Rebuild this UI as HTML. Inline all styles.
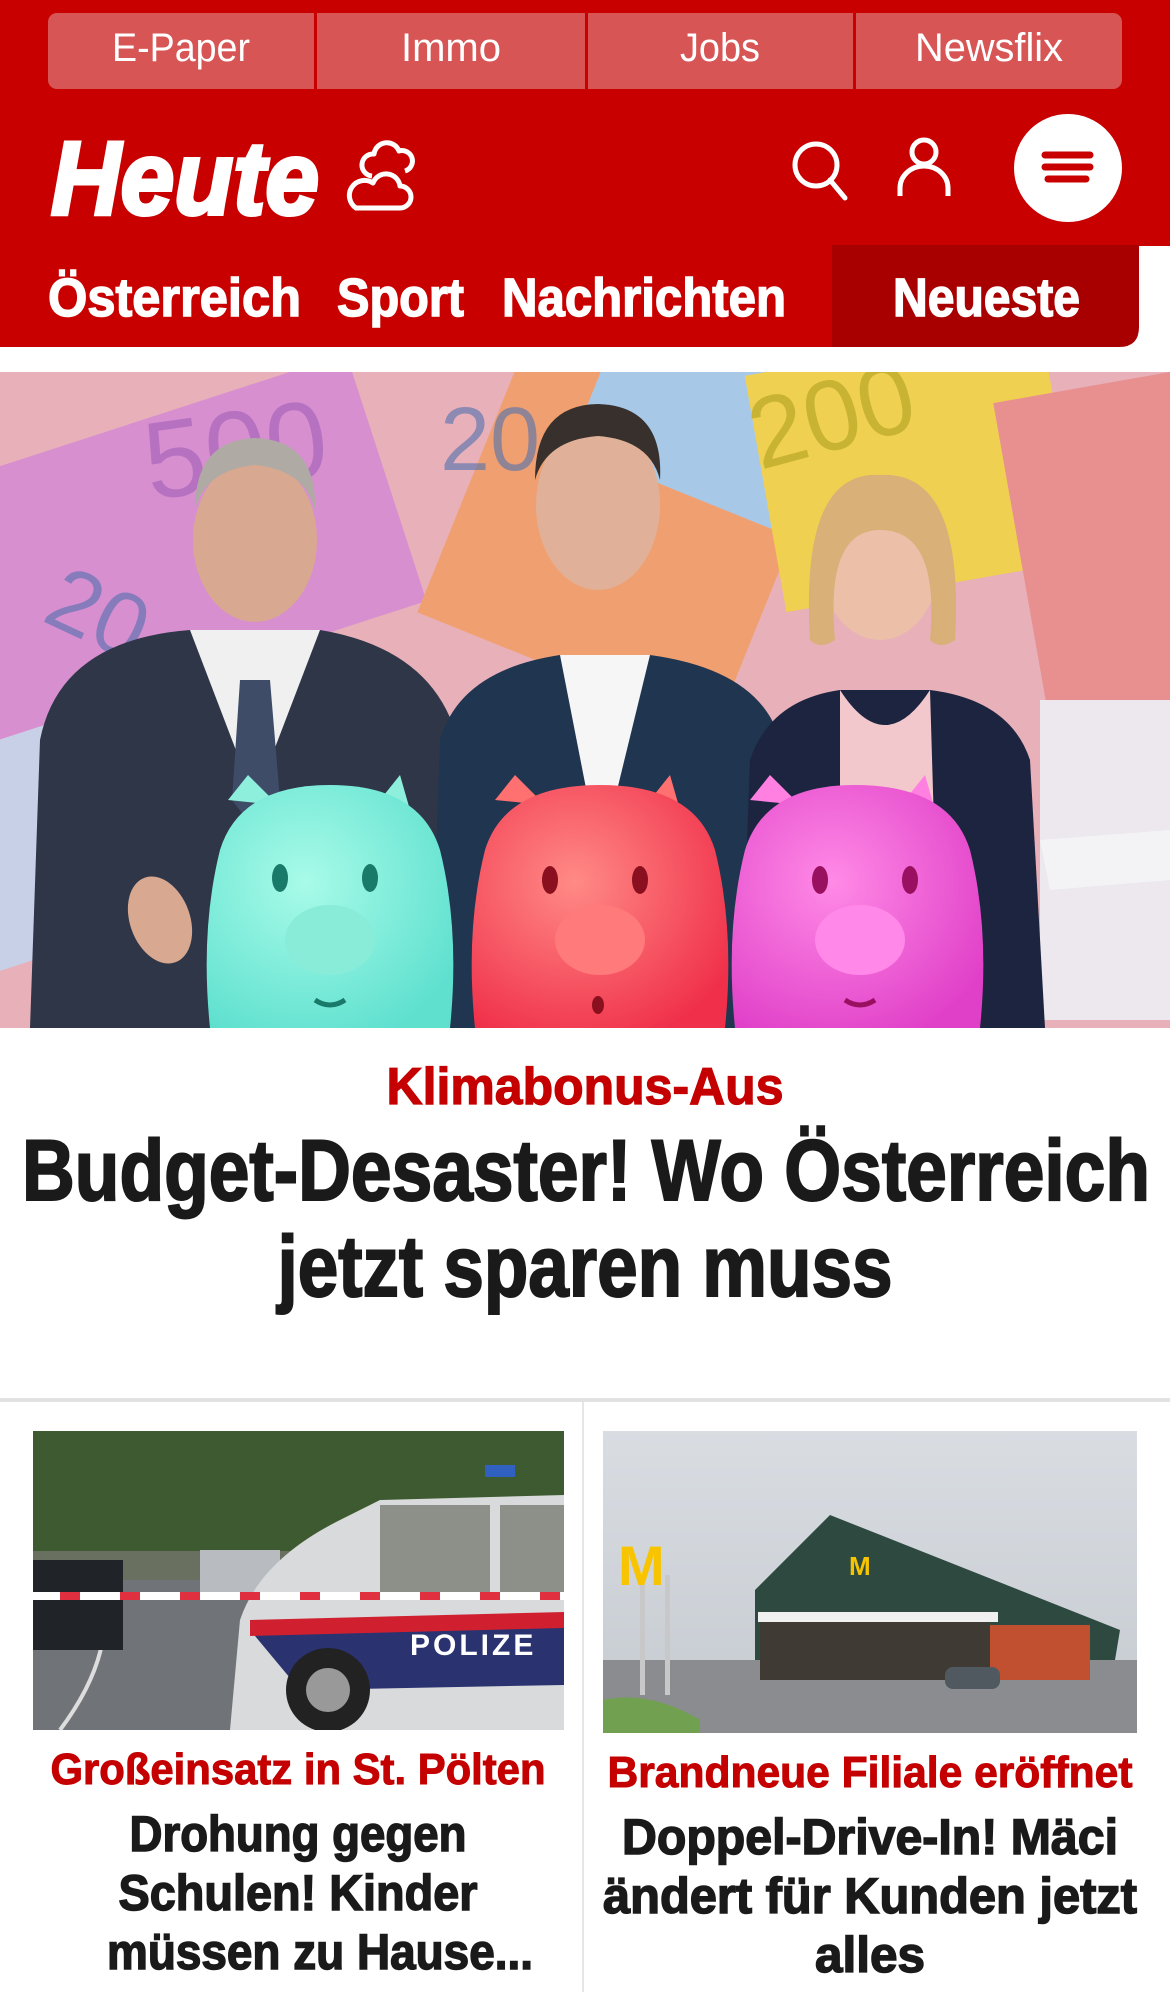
<!DOCTYPE html>
<html><head><meta charset="utf-8"><style>html,body{margin:0;padding:0;background:#fff}svg{display:block}</style></head>
<body>
<svg width="1170" height="1992" viewBox="0 0 1170 1992" xmlns="http://www.w3.org/2000/svg" font-family="Liberation Sans, sans-serif">
<defs>
<linearGradient id="sky" x1="0" y1="0" x2="0" y2="1"><stop offset="0" stop-color="#d9dde2"/><stop offset="1" stop-color="#c5cad0"/></linearGradient>
<radialGradient id="pc" cx=".4" cy=".4" r=".7"><stop offset="0" stop-color="#a8fbe8"/><stop offset="1" stop-color="#5fe0cf"/></radialGradient>
<radialGradient id="pr" cx=".4" cy=".4" r=".7"><stop offset="0" stop-color="#ff8a86"/><stop offset="1" stop-color="#f0304a"/></radialGradient>
<radialGradient id="pp" cx=".4" cy=".4" r=".7"><stop offset="0" stop-color="#ff8ae6"/><stop offset="1" stop-color="#e040c8"/></radialGradient>
<clipPath id="hero"><rect x="0" y="372" width="1170" height="656"/></clipPath>
<clipPath id="c1"><rect x="33" y="1431" width="531" height="299"/></clipPath>
<clipPath id="c2"><rect x="603" y="1431" width="534" height="302"/></clipPath>
</defs>
<!-- header -->
<rect x="0" y="0" width="1170" height="246" fill="#c80000"/>
<rect x="0" y="245" width="832" height="102" fill="#c80000"/>
<path d="M832 245 H1139 V327 Q1139 347 1119 347 H832 Z" fill="#a80000"/>
<rect x="48" y="13" width="1074" height="76" rx="9" fill="#d85555"/>
<rect x="314" y="13" width="3" height="76" fill="#c80000"/>
<rect x="585" y="13" width="3" height="76" fill="#c80000"/>
<rect x="853" y="13" width="3" height="76" fill="#c80000"/>
<g fill="#fff" font-size="40" text-anchor="middle">
<text x="181" y="61" textLength="138" lengthAdjust="spacingAndGlyphs">E-Paper</text>
<text x="451" y="61" textLength="100" lengthAdjust="spacingAndGlyphs">Immo</text>
<text x="720" y="61" textLength="80" lengthAdjust="spacingAndGlyphs">Jobs</text>
<text x="989" y="61" textLength="148" lengthAdjust="spacingAndGlyphs">Newsflix</text>
</g>
<text x="51" y="214" fill="#fff" stroke="#fff" stroke-width="4" font-size="104" font-weight="bold" font-style="italic" textLength="268" lengthAdjust="spacingAndGlyphs">Heute</text>
<!-- cloud icon -->
<g fill="none" stroke="#fff" stroke-width="5" stroke-linejoin="round">
<path d="M372 176 a11 11 0 0 1 2-22 a13 13 0 0 1 25-3 a10 10 0 0 1 6 20"/>
<path d="M356 208 h44 a11 11 0 0 0 0-22 a14 14 0 0 0-27-3 a11 11 0 0 0-17 25 z"/>
</g>
<!-- search -->
<circle cx="816" cy="165" r="21" fill="none" stroke="#fff" stroke-width="5"/>
<path d="M830 180 L845 198" stroke="#fff" stroke-width="5" stroke-linecap="round"/>
<!-- user -->
<circle cx="924" cy="152" r="12" fill="none" stroke="#fff" stroke-width="5"/>
<path d="M900 196 V188 a24 22 0 0 1 48 0 V196" fill="none" stroke="#fff" stroke-width="5"/>
<!-- menu -->
<circle cx="1068" cy="168" r="54" fill="#fff"/>
<g stroke="#c80000" stroke-width="7" stroke-linecap="round">
<line x1="1045" y1="155" x2="1090" y2="155"/><line x1="1045" y1="167" x2="1090" y2="167"/><line x1="1048" y1="179" x2="1086" y2="179"/>
</g>
<g fill="#fff" stroke="#fff" stroke-width="1.5" font-size="54" font-weight="bold">
<text x="48" y="316" textLength="253" lengthAdjust="spacingAndGlyphs">Österreich</text>
<text x="337" y="316" textLength="127" lengthAdjust="spacingAndGlyphs">Sport</text>
<text x="502" y="316" textLength="284" lengthAdjust="spacingAndGlyphs">Nachrichten</text>
<text x="893" y="316" textLength="187" lengthAdjust="spacingAndGlyphs">Neueste</text>
</g>
<!-- hero -->
<g clip-path="url(#hero)">
<rect x="0" y="372" width="1170" height="656" fill="#e8b0b8"/>
<g transform="rotate(-18 300 600)"><rect x="-100" y="380" width="520" height="260" fill="#d88fd0"/><rect x="-150" y="640" width="420" height="220" fill="#c8d0e8"/></g>
<g transform="rotate(22 700 500)"><rect x="480" y="380" width="320" height="330" fill="#f0a070"/><rect x="560" y="300" width="330" height="200" fill="#a8c8e8"/></g>
<g transform="rotate(-10 900 450)"><rect x="760" y="350" width="300" height="240" fill="#f0d050"/><rect x="1000" y="420" width="260" height="360" fill="#e89090"/></g>
<rect x="1040" y="700" width="160" height="320" fill="#ece8ee"/>
<text x="150" y="500" font-size="110" fill="#a060b8" opacity=".6" transform="rotate(-8 150 500)">500</text>
<text x="440" y="470" font-size="90" fill="#5070b0" opacity=".6">20</text>
<text x="760" y="470" font-size="100" fill="#b0a020" opacity=".6" transform="rotate(-15 760 470)">200</text>
<text x="40" y="620" font-size="90" fill="#5070b0" opacity=".6" transform="rotate(25 40 620)">20</text>
<!-- people -->
<ellipse cx="255" cy="540" rx="62" ry="82" fill="#d8a890"/>
<path d="M195 510 q0-70 60-72 q62 2 60 72 q-10-40-60-45 q-50 5-60 45z" fill="#b0aaa4"/>
<path d="M30 1028 L40 740 Q60 640 190 630 L320 630 Q440 650 460 750 L470 1028 Z" fill="#2e3648"/>
<path d="M190 630 L255 800 L320 630 Z" fill="#f0f0f0"/>
<path d="M240 680 L270 680 L280 800 L255 830 L232 800Z" fill="#3e4c68"/>
<ellipse cx="598" cy="505" rx="62" ry="85" fill="#e0b098"/>
<path d="M535 480 q0-75 63-76 q66 2 62 76 q-10-40-62-44 q-52 4-63 44z" fill="#38302c"/>
<path d="M430 1028 L440 740 Q460 670 560 655 L650 655 Q760 670 780 740 L790 1028 Z" fill="#1f3550"/>
<path d="M560 655 L600 860 L650 655Z" fill="#f6f6f6"/>
<ellipse cx="880" cy="560" rx="60" ry="80" fill="#ecc0a8"/>
<path d="M810 640 q-10-170 70-165 q85-5 75 165 q-15 10-25 0 q10-110-50-110 q-55 0-45 110 q-15 10-25 0z" fill="#d8b078"/>
<path d="M740 1028 L750 760 Q770 700 840 690 L930 690 Q1010 700 1030 760 L1045 1028 Z" fill="#1c2440"/>
<path d="M840 690 Q885 760 930 690 L940 1028 L840 1028Z" fill="#f2c8cc"/>
<path d="M1040 840 L1170 830 L1170 880 L1050 890Z" fill="#f4f4f6" opacity=".9"/>
<ellipse cx="160" cy="920" rx="30" ry="45" fill="#d8a890" transform="rotate(-20 160 920)"/>
<!-- piggies -->
<g>
<path d="M228 800 l20-25 30 30z M380 800 l20-25 10 35z" fill="#8ef0dc"/>
<path d="M210 1028 Q200 930 220 850 Q240 785 330 785 Q420 785 440 850 Q460 930 450 1028Z" fill="url(#pc)"/>
<ellipse cx="330" cy="940" rx="45" ry="35" fill="#88ecd8"/>
<ellipse cx="280" cy="878" rx="8" ry="14" fill="#1a7a6a"/><ellipse cx="370" cy="878" rx="8" ry="14" fill="#1a7a6a"/>
<path d="M315 1000 q15 10 30 0" stroke="#1a7a6a" stroke-width="5" fill="none"/>
</g>
<g>
<path d="M495 800 l20-25 30 30z M650 800 l20-25 10 35z" fill="#ff7070"/>
<path d="M475 1028 Q465 930 485 850 Q505 785 600 785 Q695 785 715 850 Q735 930 725 1028Z" fill="url(#pr)"/>
<ellipse cx="600" cy="940" rx="45" ry="35" fill="#ff7a7a"/>
<ellipse cx="550" cy="880" rx="8" ry="14" fill="#8a1020"/><ellipse cx="640" cy="880" rx="8" ry="14" fill="#8a1020"/>
<ellipse cx="598" cy="1005" rx="6" ry="9" fill="#8a1020"/>
</g>
<g>
<path d="M750 800 l20-25 30 30z M905 800 l20-25 10 35z" fill="#ff80e0"/>
<path d="M735 1028 Q725 930 745 850 Q765 785 855 785 Q950 785 970 850 Q990 930 980 1028Z" fill="url(#pp)"/>
<ellipse cx="860" cy="940" rx="45" ry="35" fill="#ff88e8"/>
<ellipse cx="820" cy="880" rx="8" ry="14" fill="#9a1060"/><ellipse cx="910" cy="880" rx="8" ry="14" fill="#9a1060"/>
<path d="M845 1000 q15 10 30 0" stroke="#9a1060" stroke-width="5" fill="none"/>
</g>
</g>
<!-- headline -->
<text x="585" y="1104" text-anchor="middle" fill="#c40000" stroke="#c40000" stroke-width="1.2" font-size="52" font-weight="bold" textLength="397" lengthAdjust="spacingAndGlyphs">Klimabonus-Aus</text>
<g fill="#1a1a1a" stroke="#1a1a1a" stroke-width="2" font-size="86" font-weight="bold" text-anchor="middle">
<text x="586" y="1200" textLength="1128" lengthAdjust="spacingAndGlyphs">Budget-Desaster! Wo Österreich</text>
<text x="585" y="1296" textLength="615" lengthAdjust="spacingAndGlyphs">jetzt sparen muss</text>
</g>
<rect x="0" y="1398" width="1170" height="4" fill="#e2e2e2"/>
<rect x="582" y="1402" width="2" height="590" fill="#e6e6e6"/>
<!-- card 1 image -->
<g clip-path="url(#c1)">
<rect x="33" y="1431" width="531" height="299" fill="#6a7060"/>
<rect x="33" y="1431" width="531" height="120" fill="#3e5a30"/>
<rect x="33" y="1580" width="531" height="150" fill="#707478"/>
<path d="M60 1730 Q120 1650 100 1580" stroke="#ddd" stroke-width="4" fill="none"/>
<rect x="33" y="1560" width="90" height="90" fill="#202428"/>
<rect x="200" y="1550" width="80" height="45" fill="#b8bcc0"/>
<path d="M230 1730 L240 1620 Q260 1560 340 1520 L380 1500 L564 1495 L564 1730Z" fill="#d8dadc"/>
<rect x="380" y="1505" width="110" height="90" fill="#8c9088"/>
<rect x="500" y="1505" width="64" height="90" fill="#8c9088"/>
<path d="M250 1630 L564 1625 L564 1685 L300 1690Z" fill="#2a3270"/>
<path d="M250 1620 L564 1612 L564 1628 L250 1636Z" fill="#d02030"/>
<text x="410" y="1655" font-size="30" font-weight="bold" fill="#fff" letter-spacing="3">POLIZE</text>
<circle cx="328" cy="1690" r="42" fill="#222"/><circle cx="328" cy="1690" r="22" fill="#999"/>
<rect x="33" y="1592" width="531" height="8" fill="#fff"/>
<g fill="#e03040"><rect x="60" y="1592" width="20" height="8"/><rect x="120" y="1592" width="20" height="8"/><rect x="180" y="1592" width="20" height="8"/><rect x="240" y="1592" width="20" height="8"/><rect x="300" y="1592" width="20" height="8"/><rect x="360" y="1592" width="20" height="8"/><rect x="420" y="1592" width="20" height="8"/><rect x="480" y="1592" width="20" height="8"/><rect x="540" y="1592" width="20" height="8"/></g>
<rect x="485" y="1465" width="30" height="12" fill="#3060c0"/>
</g>
<!-- card 2 image -->
<g clip-path="url(#c2)">
<rect x="603" y="1431" width="534" height="302" fill="url(#sky)"/>
<rect x="603" y="1660" width="534" height="73" fill="#8a8c90"/>
<path d="M603 1700 Q650 1690 700 1720 L700 1733 L603 1733Z" fill="#70a050"/>
<path d="M755 1590 L830 1515 L1120 1630 L1115 1660 L755 1660Z" fill="#2e4a40"/>
<rect x="760" y="1620" width="230" height="60" fill="#403a34"/>
<rect x="990" y="1625" width="100" height="55" fill="#c05030"/>
<rect x="758" y="1612" width="240" height="10" fill="#f0f0f0"/>
<text x="849" y="1575" font-size="26" font-weight="bold" fill="#f8c400">M</text>
<text x="618" y="1585" font-size="56" font-weight="bold" fill="#f8c400">M</text>
<rect x="640" y="1585" width="5" height="110" fill="#c8c8c8"/><rect x="665" y="1575" width="5" height="120" fill="#c8c8c8"/>
<rect x="945" y="1667" width="55" height="22" rx="8" fill="#505860"/>
</g>
<!-- card texts -->
<g font-size="44" font-weight="bold" text-anchor="middle" fill="#c40000" stroke="#c40000" stroke-width="1">
<text x="298" y="1784" textLength="495" lengthAdjust="spacingAndGlyphs">Großeinsatz in St. Pölten</text>
<text x="870" y="1787" textLength="525" lengthAdjust="spacingAndGlyphs">Brandneue Filiale eröffnet</text>
</g>
<g fill="#1a1a1a" stroke="#1a1a1a" stroke-width="1.5" font-size="50" font-weight="bold" text-anchor="middle">
<text x="298" y="1851" textLength="337" lengthAdjust="spacingAndGlyphs">Drohung gegen</text>
<text x="298" y="1910" textLength="359" lengthAdjust="spacingAndGlyphs">Schulen! Kinder</text>
<text x="320" y="1969" textLength="426" lengthAdjust="spacingAndGlyphs">müssen zu Hause...</text>
<text x="870" y="1854" textLength="496" lengthAdjust="spacingAndGlyphs">Doppel-Drive-In! Mäci</text>
<text x="870" y="1913" textLength="534" lengthAdjust="spacingAndGlyphs">ändert für Kunden jetzt</text>
<text x="870" y="1972" textLength="110" lengthAdjust="spacingAndGlyphs">alles</text>
</g>
</svg>
</body></html>
